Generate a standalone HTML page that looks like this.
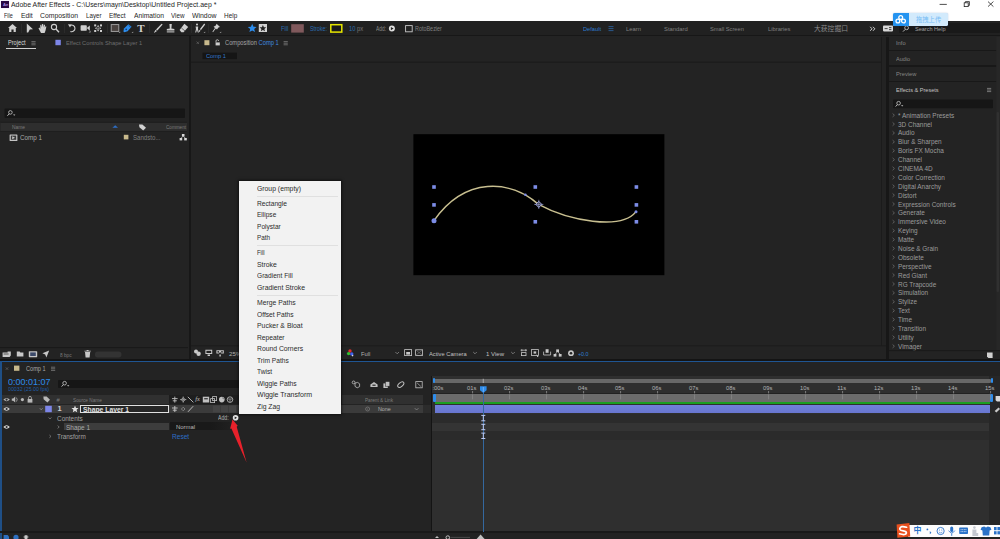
<!DOCTYPE html>
<html><head><meta charset="utf-8"><title>Adobe After Effects</title>
<style>
*{margin:0;padding:0;box-sizing:border-box}
html,body{width:1000px;height:539px;overflow:hidden;background:#232323}
body{position:relative;font-family:"Liberation Sans","Noto Sans CJK SC",sans-serif;font-size:6.5px;color:#9a9a9a}
.a{position:absolute}
.t{position:absolute;white-space:nowrap;line-height:10px;height:10px}
.w{color:#111}
.bl{color:#2d8ceb}
.mi{font-size:6.8px;color:#2c2c2c}
svg{position:absolute;overflow:visible}
</style></head><body>

<!-- title + menu -->
<div class="a" style="left:0;top:0;width:1000px;height:21px;background:#fff"></div>
<div class="a" style="left:1.4px;top:1.2px;width:7.4px;height:6.8px;background:#2a0845;box-shadow:0 0 0.8px #c9a8ff"></div>
<div class="t" style="left:2.9px;top:-0.2px;font-size:4.2px;color:#a78be0;font-weight:bold">Ae</div>
<div class="t" style="left:11.4px;top:0.4px;font-size:6.9px;color:#262626;transform-origin:0 50%;transform:scaleX(1.0049)">Adobe After Effects - C:\Users\mayn\Desktop\Untitled Project.aep *</div>
<div class="t" style="left:4.25px;top:11.2px;font-size:6.9px;color:#262626;transform-origin:0 50%;transform:scaleX(0.7876)">File</div>
<div class="t" style="left:20.75px;top:11.2px;font-size:6.9px;color:#262626;transform-origin:0 50%;transform:scaleX(0.9895)">Edit</div>
<div class="t" style="left:40.00px;top:11.2px;font-size:6.9px;color:#262626;transform-origin:0 50%;transform:scaleX(0.9918)">Composition</div>
<div class="t" style="left:86.00px;top:11.2px;font-size:6.9px;color:#262626;transform-origin:0 50%;transform:scaleX(0.8986)">Layer</div>
<div class="t" style="left:109.25px;top:11.2px;font-size:6.9px;color:#262626;transform-origin:0 50%;transform:scaleX(0.9429)">Effect</div>
<div class="t" style="left:133.75px;top:11.2px;font-size:6.9px;color:#262626;transform-origin:0 50%;transform:scaleX(0.9786)">Animation</div>
<div class="t" style="left:171.00px;top:11.2px;font-size:6.9px;color:#262626;transform-origin:0 50%;transform:scaleX(0.9114)">View</div>
<div class="t" style="left:192.00px;top:11.2px;font-size:6.9px;color:#262626;transform-origin:0 50%;transform:scaleX(0.9994)">Window</div>
<div class="t" style="left:224.25px;top:11.2px;font-size:6.9px;color:#262626;transform-origin:0 50%;transform:scaleX(0.9350)">Help</div>
<!-- window controls -->
<svg style="left:930px;top:0" width="70" height="10" viewBox="930 0 70 10">
 <path d="M939.6 4.4 H946.8" stroke="#222" stroke-width="0.8"/>
 <rect x="964.2" y="2.8" width="4" height="3.8" fill="none" stroke="#222" stroke-width="0.8"/>
 <path d="M965.4 2.8 V1.6 H969.4 V5.4 H968.2" fill="none" stroke="#222" stroke-width="0.8"/>
 <path d="M988 1.6 L993.4 6.6 M993.4 1.6 L988 6.6" stroke="#222" stroke-width="0.8"/>
</svg>

<!-- toolbar -->
<div class="a" id="toolbar" style="left:0;top:21px;width:1000px;height:14px;background:#212121"></div>

<!-- toolbar icons -->
<div class="a" style="left:899.4px;top:22.6px;width:100.6px;height:10px;background:#191919;border-radius:1px"></div>
<svg style="left:0;top:21px" width="1000" height="15" viewBox="0 21 1000 15">
 <g fill="#cfcfcf" stroke="none">
  <!-- home -->
  <path d="M12.5 24 L17 28 L15.8 28 L15.8 32 L13.6 32 L13.6 29.5 L11.4 29.5 L11.4 32 L9.2 32 L9.2 28 L8 28 Z"/>
  <!-- selection arrow -->
  <path d="M26.8 23.5 L33 29.3 L29.8 29.5 L28.2 32.6 L26.8 32.6 Z"/>
  <!-- hand -->
  <path d="M38.5 28.2 L39.6 27.6 L40.3 29 L40.3 25 L41.3 24.6 L41.8 27.2 L42.1 24 L43.2 24 L43.4 27.2 L44 24.6 L45 24.9 L44.8 27.8 L45.6 26.2 L46.4 26.6 L45.4 31 L44.6 33 L41 33 Z"/>
 </g>
 <!-- zoom -->
 <circle cx="54" cy="27" r="2.6" fill="none" stroke="#cfcfcf" stroke-width="1.1"/>
 <path d="M56 29 L59 32.3" stroke="#cfcfcf" stroke-width="1.4" fill="none"/>
 <!-- rotate -->
 <path d="M70.2 25.4 A3.3 3.3 0 1 1 70.4 31.4" fill="none" stroke="#cfcfcf" stroke-width="1.1"/>
 <path d="M68 24.2 L71.6 24.4 L70 27.6 Z" fill="#cfcfcf"/>
 <!-- camera -->
 <rect x="80.6" y="25.2" width="6.2" height="5.6" rx="0.8" fill="#cfcfcf"/>
 <path d="M86.8 28 L89.8 25.4 L89.8 30.8 Z" fill="#cfcfcf"/>
 <path d="M88.6 32.4 L90.6 32.4 L90.6 30.6 Z" fill="#999"/>
 <!-- pan behind -->
 <g fill="#cfcfcf">
  <rect x="94.2" y="24.4" width="2" height="2"/><rect x="100" y="24.4" width="2" height="2"/>
  <rect x="94.2" y="30" width="2" height="2"/><rect x="100" y="30" width="2" height="2"/>
  <path d="M98.1 25 L99.4 26.8 L96.8 26.8 Z M98.1 31.4 L99.4 29.6 L96.8 29.6 Z M95 28.2 L96.6 27 L96.6 29.4 Z M101.2 28.2 L99.6 27 L99.6 29.4 Z"/>
  <rect x="97.5" y="27.6" width="1.2" height="1.2"/>
 </g>
 <!-- rectangle tool -->
 <rect x="111.2" y="24.6" width="7.6" height="6.8" fill="#4a4340" stroke="#a8a8a8" stroke-width="0.9"/>
 <path d="M118.6 33 L120.2 33 L120.2 31.6 Z" fill="#999"/>
 <!-- pen (blue, selected) -->
 <path d="M123.4 31.6 L124 28.4 L128.4 24.2 L131.6 26.8 L127.6 31.2 L124.4 32.2 Z" fill="#2d8ceb"/>
 <path d="M128.6 25.4 L130.6 27.2" stroke="#0d3c78" stroke-width="0.7"/>
 <circle cx="126.2" cy="29.4" r="0.8" fill="#0d3c78"/>
 <path d="M131.6 33 L133.2 33 L133.2 31.6 Z" fill="#999"/>
 <!-- pin -->
 <path d="M216.6 23.8 L220 27 L218.4 27.4 L217 29.6 L215.8 28.6 L213 32.2 L212.4 31.8 L215 28 L213.6 26.8 L215.8 25.4 Z" fill="#cfcfcf"/>
 <path d="M219.6 33 L221.2 33 L221.2 31.6 Z" fill="#999"/>
 <!-- brush -->
 <path d="M161.6 23.8 L162.6 24.6 L157.4 30.4 L156 29.4 Z" fill="#cfcfcf"/>
 <path d="M155.6 29.8 L157 31 L154.4 32.8 L154 32.4 Z" fill="#cfcfcf"/>
 <!-- stamp -->
 <path d="M169.4 24 L171.8 24 L171.4 28.4 L174.4 29 L174.4 30.6 L166.8 30.6 L166.8 29 L169.8 28.4 Z" fill="#cfcfcf"/>
 <rect x="166.8" y="31.4" width="7.6" height="1" fill="#cfcfcf"/>
 <!-- eraser -->
 <path d="M184.4 23.8 L188.2 27 L183.6 32.2 L181.4 32.2 L179.6 30 Z" fill="#cfcfcf"/>
 <path d="M181.4 28 L185 31" stroke="#1f1f1f" stroke-width="0.6"/>
 <!-- roto -->
 <circle cx="197" cy="24.6" r="1" fill="#cfcfcf"/>
 <path d="M195.6 26.4 L198.2 26.4 L198 29 L198.8 32.6 L197.8 32.6 L197 29.8 L196.2 32.6 L195.2 32.6 L196 29 Z" fill="#cfcfcf"/>
 <path d="M204.2 23.6 L205.2 24.4 L201 30 L199.8 29.2 Z M199.4 29.8 L200.6 30.8 L198.6 32.4 Z" fill="#cfcfcf"/>
 <path d="M203.6 33 L205.2 33 L205.2 31.6 Z" fill="#999"/>
 <!-- separators -->
 <path d="M21.5 24 V33 M64.5 24 V33 M107.5 24 V33 M149.5 24 V33 M191.5 24 V33 M208.5 24 V33" stroke="#333" stroke-width="0.6"/>
 <!-- star -->
 <path d="M252.2 23.8 L253.5 26.7 L256.6 26.9 L254.2 29 L255 32.1 L252.2 30.4 L249.4 32.1 L250.2 29 L247.8 26.9 L250.9 26.7 Z" fill="#2d8ceb"/>
 <rect x="258.8" y="24" width="8.2" height="8" fill="#d4d4d4"/>
 <path d="M262.9 25 L263.9 27.2 L266.2 27.3 L264.4 28.9 L265 31.2 L262.9 30 L260.8 31.2 L261.4 28.9 L259.6 27.3 L261.9 27.2 Z" fill="#222"/>
 <!-- fill swatch -->
 <rect x="291.2" y="24.2" width="12.6" height="8.4" fill="#80595c"/>
 <rect x="330.8" y="24.7" width="11" height="7.4" fill="#1a1a1a" stroke="#e6e600" stroke-width="1.5"/>
 <!-- add circle -->
 <circle cx="391.9" cy="28.6" r="3" fill="#e0e0e0"/>
 <path d="M390.9 27 L393.6 28.6 L390.9 30.2 Z" fill="#1f1f1f"/>
 <!-- checkbox -->
 <rect x="405.6" y="25.6" width="6.6" height="6.2" fill="none" stroke="#c8c8c8" stroke-width="0.9"/>
 <!-- workspace menu icon -->
 <path d="M608.5 26.6 H613.5 M608.5 28.6 H613.5 M608.5 30.6 H613.5" stroke="#2d6fb5" stroke-width="0.7"/>
 <!-- chevrons -->
 <path d="M870.2 26.8 L872 28.8 L870.2 30.8 M873 26.8 L874.8 28.8 L873 30.8" stroke="#cfcfcf" stroke-width="1" fill="none"/>
 <!-- sync icon -->
 <rect x="883" y="25.6" width="10" height="5.8" rx="0.8" fill="#d8d8d8"/>
 <path d="M884.6 28.6 H887.6 M889 27.6 H891.4 M889 29.6 H891.4" stroke="#222" stroke-width="0.8"/>
 <!-- search icon -->
 <circle cx="906.6" cy="27.8" r="1.9" fill="none" stroke="#bbb" stroke-width="0.9"/>
 <path d="M905.2 29.4 L903 31.6" stroke="#bbb" stroke-width="1"/>
</svg>
<div class="t" style="left:141px;top:23.4px;font-family:'Liberation Serif',serif;font-size:11px;color:#cfcfcf;font-weight:bold;transform:translateX(-50%)">T</div>
<div class="t" style="left:280.6px;top:24px;font-size:6.4px;color:#2b6cb0;transform-origin:0 50%;transform:scaleX(0.9055)">Fill</div>
<div class="t" style="left:310.0px;top:24px;font-size:6.4px;color:#2b6cb0;transform-origin:0 50%;transform:scaleX(0.8395)">Stroke:</div>
<div class="t" style="left:348.8px;top:24px;font-size:6.4px;color:#777;transform-origin:0 50%;transform:scaleX(0.9079)"><span style="color:#2b6cb0">10</span> px</div>
<div class="t" style="left:375.6px;top:24px;font-size:6.4px;color:#8a8a8a;transform-origin:0 50%;transform:scaleX(0.7601)">Add:</div>
<div class="t" style="left:415.0px;top:24px;font-size:6.4px;color:#808080;transform-origin:0 50%;transform:scaleX(0.8506)">RotoBezier</div>
<div class="t" style="left:583.0px;top:24px;font-size:6.2px;color:#2d7bd0;transform-origin:0 50%;transform:scaleX(0.9179)">Default</div>
<div class="t" style="left:625.5px;top:24px;font-size:6.2px;color:#808080;transform-origin:0 50%;transform:scaleX(0.9477)">Learn</div>
<div class="t" style="left:663.8px;top:24px;font-size:6.2px;color:#808080;transform-origin:0 50%;transform:scaleX(0.9433)">Standard</div>
<div class="t" style="left:710.0px;top:24px;font-size:6.2px;color:#808080;transform-origin:0 50%;transform:scaleX(0.9186)">Small Screen</div>
<div class="t" style="left:767.5px;top:24px;font-size:6.2px;color:#808080;transform-origin:0 50%;transform:scaleX(0.9480)">Libraries</div>
<div class="t" style="left:914.9px;top:24px;font-size:6.2px;color:#a0a0a0;transform-origin:0 50%;transform:scaleX(0.8954)">Search Help</div>
<div class="t" style="left:814px;top:23.8px;font-size:6.8px;color:#8a8a8a;transform-origin:0 50%;transform:scaleX(1.0005)">大获控掘口</div>


<!-- project panel -->
<div class="a" style="left:0;top:34.8px;width:1000px;height:1.4px;background:#171717"></div>
<div class="a" style="left:188.6px;top:36.2px;width:2.6px;height:323px;background:#171717"></div>
<div class="t" style="left:7.5px;top:38.4px;font-size:6.4px;color:#d8d8d8;transform-origin:0 50%;transform:scaleX(0.8798)">Project</div>
<div class="a" style="left:6px;top:47.6px;width:30px;height:1px;background:#d0d0d0"></div>
<svg style="left:0;top:36px" width="190" height="325" viewBox="0 36 190 325">
 <path d="M31.4 41.6 H35.6 M31.4 43.2 H35.6 M31.4 44.8 H35.6" stroke="#8a8a8a" stroke-width="0.7"/>
 <rect x="55.4" y="39.8" width="5.4" height="5.4" fill="#7d86e8"/>
 <!-- search -->
 <rect x="4.5" y="108.4" width="180.5" height="9.6" rx="1" fill="#161616"/>
 <circle cx="10.4" cy="112.4" r="1.8" fill="none" stroke="#c8c8c8" stroke-width="0.8"/>
 <path d="M9.2 113.8 L7.4 115.8" stroke="#c8c8c8" stroke-width="0.9"/>
 <path d="M13 114.4 L15.4 114.4 L14.2 115.8 Z" fill="#c8c8c8"/>
 <!-- column header -->
 <rect x="0.5" y="122.6" width="186.5" height="8.6" fill="#2e2e2e"/>
 <path d="M0.5 122.4 H187 M0.5 131.4 H187" stroke="#1a1a1a" stroke-width="0.6"/>
 <path d="M112.4 127.8 L115.2 125.2 L118 127.8 Z" fill="#2d6fc8"/>
 <path d="M139 124.6 L142.4 124.4 L146 127.8 L143.2 130.6 L139.4 127.2 Z" fill="#d0d0d0"/>
 <!-- comp row -->
 <rect x="9.6" y="134.4" width="7.8" height="6.6" rx="0.6" fill="#c4c4c4"/>
 <rect x="10.8" y="135.6" width="5.4" height="4.2" fill="#3a3a3a"/>
 <path d="M12.2 136.2 L15 137.7 L12.2 139.2 Z" fill="#c4c4c4"/>
 <rect x="123.8" y="134.8" width="4.6" height="4.6" fill="#c8b98c"/>
 <g fill="#d8d8d8"><rect x="181.9" y="134" width="2.6" height="2.4"/><rect x="179.6" y="138" width="2.6" height="2.4"/><rect x="184.2" y="138" width="2.6" height="2.4"/><path d="M183.2 136 L180.9 138.4 M183.2 136 L185.5 138.4" stroke="#d8d8d8" stroke-width="0.7"/></g>
 <!-- footer -->
 <path d="M0 347.6 H188" stroke="#161616" stroke-width="0.8"/>
 <g fill="#c8c8c8">
  <path d="M2.6 352.4 H7.6 V351.4 H10.8 V355.4 L9.6 357 H2.6 Z"/>
  <path d="M16.8 351.6 H19.6 L20.4 352.4 H23.4 V356.6 H16.8 Z"/>
  <rect x="28.8" y="351.2" width="8.4" height="6" rx="0.6"/>
  <path d="M49.2 350.4 L46.4 357.4 L45.2 354.4 L42.4 353.2 Z"/>
  <path d="M85 352 H90.2 L89.6 357.6 H85.6 Z M84.4 350.8 H90.8 V351.6 H84.4 Z M86.6 350 H88.6 V350.8 H86.6 Z"/>
 </g>
 <rect x="30.2" y="352.4" width="5.6" height="3.6" fill="#3c4a6a"/>
 <path d="M3.6 354 H8.6" stroke="#222" stroke-width="0.7"/>
 <rect x="95" y="351.6" width="26.4" height="5.8" rx="2.6" fill="#333"/>
</svg>
<div class="t" style="left:65.6px;top:38.4px;font-size:6.2px;color:#6e6e6e;transform-origin:0 50%;transform:scaleX(0.9243)">Effect Controls Shape Layer 1</div>
<div class="t" style="left:12px;top:122px;font-size:5.8px;color:#7c7c7c;transform-origin:0 50%;transform:scaleX(0.8404)">Name</div>
<div class="t" style="left:166.2px;top:122px;font-size:5.8px;color:#7c7c7c;transform-origin:0 50%;transform:scaleX(0.7955)">Comment</div>
<div class="t" style="left:20px;top:133.3px;font-size:7px;color:#a8a8a8;transform-origin:0 50%;transform:scaleX(0.8974)">Comp 1</div>
<div class="t" style="left:132.5px;top:133.4px;font-size:6.8px;color:#7e7e7e;transform-origin:0 50%;transform:scaleX(0.8984)">Sandsto...</div>
<div class="t" style="left:60.4px;top:349.6px;font-size:5.4px;color:#7a7a7a;transform-origin:0 50%;transform:scaleX(0.8796)">8 bpc</div>


<!-- comp panel -->
<svg style="left:190px;top:36px" width="700" height="325" viewBox="190 36 700 325">
 <path d="M196.6 41.6 L199 44 M199 41.6 L196.6 44" stroke="#666" stroke-width="0.7"/>
 <rect x="204.4" y="40.2" width="5" height="5" fill="#c8b98c"/>
 <path d="M215.6 42.4 H219.8 V45.4 H215.6 Z" fill="#cfcfcf"/>
 <path d="M216 42.4 V41 A1.3 1.3 0 0 1 218.6 41" fill="none" stroke="#cfcfcf" stroke-width="0.8"/>
 <path d="M283.6 41.6 H287.8 M283.6 43.2 H287.8 M283.6 44.8 H287.8" stroke="#8a8a8a" stroke-width="0.7"/>
 <rect x="202.5" y="52.6" width="34.5" height="6.6" fill="#151515"/>
 <path d="M191 62.2 H881" stroke="#181818" stroke-width="0.9"/>
 <!-- viewer -->
 <rect x="413.4" y="134.2" width="251" height="141" fill="#000"/>
 <path d="M434 220.6 C465.3 176 510.7 179.8 538.5 204.4 C568.2 220.5 621.2 230.7 636 211.6" fill="none" stroke="#c8bf90" stroke-width="1.5"/>
 <g fill="#7c8ce6">
  <rect x="432.2" y="185.2" width="3.6" height="3.6"/><rect x="533.5" y="185.2" width="3.6" height="3.6"/><rect x="634.6" y="185.2" width="3.6" height="3.6"/>
  <rect x="432.2" y="203.1" width="3.6" height="3.6"/><rect x="634.6" y="203.1" width="3.6" height="3.6"/>
  <rect x="533.5" y="220" width="3.6" height="3.6"/><rect x="634.6" y="220" width="3.6" height="3.6"/>
  <circle cx="434" cy="220.8" r="2.5"/>
  <circle cx="636" cy="211.8" r="1.5"/>
  <circle cx="525.4" cy="194.8" r="1.3"/>
 </g>
 <path d="M538.8 201.4 L541.8 204.4 L538.8 207.4 L535.8 204.4 Z" fill="#222" stroke="#aab2ee" stroke-width="1"/>
 <path d="M538.8 199.8 V209 M534.2 204.4 H543.4" stroke="#aab2ee" stroke-width="0.6"/>
 <!-- footer -->
 <path d="M191 345.8 H886" stroke="#1a1a1a" stroke-width="0.8"/>
 <g fill="#c8c8c8">
  <circle cx="196" cy="351.4" r="2"/><circle cx="198.6" cy="353.8" r="2.2"/>
  <path d="M205.4 349.8 H212.2 V354 H205.4 Z M207.6 354.6 H210 V356 H207.6 Z"/>
  <path d="M216.4 350.2 H223.8 V353.4 H221.4 L220.1 352 L218.8 353.4 H216.4 Z M219.4 354.6 H220.8 V356.4 H219.4 Z"/>
 </g>
 <rect x="206.4" y="350.8" width="4.8" height="2.2" fill="#232323"/>
 <circle cx="218.2" cy="351.8" r="0.9" fill="#232323"/><circle cx="222" cy="351.8" r="0.9" fill="#232323"/>
 <circle cx="350" cy="351" r="1.7" fill="#e03030"/><circle cx="348.6" cy="353.6" r="1.7" fill="#30c030"/><circle cx="351.8" cy="354" r="1.7" fill="#4060f0"/><circle cx="352.6" cy="355.6" r="0.8" fill="#ddd"/>
 <path d="M395.4 352 L397.2 353.8 L399 352 M473.2 352 L475 353.8 L476.8 352 M511.2 352 L513 353.8 L514.8 352" stroke="#8a8a8a" stroke-width="0.8" fill="none"/>
 <rect x="404.6" y="349.6" width="7" height="6" fill="none" stroke="#c8c8c8" stroke-width="0.8"/><rect x="406.2" y="352" width="3.8" height="2.6" fill="#c8c8c8"/>
 <rect x="415.6" y="349.8" width="7" height="5.6" fill="none" stroke="#c8c8c8" stroke-width="0.8"/><path d="M415.6 349.8 L422.6 355.4 M422.6 349.8 L415.6 355.4" stroke="#888" stroke-width="0.5"/>
 <g fill="none" stroke="#c8c8c8" stroke-width="0.8">
  <path d="M520.6 350.2 H527 M521.8 349.2 V351.4 M525.8 349.2 V351.4"/><rect x="521.6" y="352.6" width="4.4" height="3"/>
  <rect x="531.6" y="349.6" width="6.8" height="5.8"/>
  <path d="M543.6 351.6 V355 H550.6 V351.6"/>
 </g>
 <g fill="#c8c8c8">
  <rect x="533.6" y="351.4" width="2.6" height="2.2"/><path d="M536.4 354 L538.6 357 L537.2 357 Z"/>
  <rect x="545.6" y="349.2" width="3" height="3.6"/>
  <rect x="556.2" y="349.4" width="2.8" height="2.6"/><rect x="553.6" y="354" width="2.8" height="2.6"/><rect x="558.8" y="354" width="2.8" height="2.6"/><path d="M557.6 351.6 L555 354.4 M557.6 351.6 L560.2 354.4" stroke="#c8c8c8" stroke-width="0.7"/>
  <circle cx="571" cy="353.2" r="2.9"/>
 </g>
 <circle cx="571" cy="353.2" r="1.3" fill="#232323"/>
</svg>
<div class="t" style="left:225px;top:38.4px;font-size:6.4px;color:#a4a4a4;transform-origin:0 50%;transform:scaleX(0.9014)">Composition <span style="color:#3f8ae0">Comp 1</span></div>
<div class="t" style="left:205.6px;top:50.9px;font-size:6.2px;color:#3478d0;transform-origin:0 50%;transform:scaleX(0.9229)">Comp 1</div>
<div class="t" style="left:229px;top:348.6px;font-size:6.2px;color:#b0b0b0">25%</div>
<div class="t" style="left:360.6px;top:348.6px;font-size:6.2px;color:#b0b0b0;transform-origin:0 50%;transform:scaleX(0.9415)">Full</div>
<div class="t" style="left:429px;top:348.6px;font-size:6.2px;color:#c0c0c0;transform-origin:0 50%;transform:scaleX(0.9291)">Active Camera</div>
<div class="t" style="left:485.6px;top:348.6px;font-size:6.2px;color:#c0c0c0;transform-origin:0 50%;transform:scaleX(0.9746)">1 View</div>
<div class="t" style="left:578.4px;top:348.6px;font-size:6.2px;color:#2d7bd0;transform-origin:0 50%;transform:scaleX(0.8593)">+0.0</div>


<!-- right panel -->
<div class="a" style="left:886.4px;top:37px;width:3px;height:322px;background:#171717"></div>
<div class="a" style="left:880.6px;top:37px;width:0.8px;height:309px;background:#1b1b1b"></div>
<div class="a" style="left:889px;top:49.5px;width:111px;height:1.4px;background:#181818"></div>
<div class="a" style="left:889px;top:65.3px;width:111px;height:1.4px;background:#181818"></div>
<div class="a" style="left:889px;top:81.0px;width:111px;height:1.4px;background:#181818"></div>
<div class="t" style="left:896.2px;top:37.8px;font-size:6.2px;color:#868686;transform-origin:0 50%;transform:scaleX(0.9295)">Info</div>
<div class="t" style="left:896.2px;top:53.6px;font-size:6.2px;color:#868686;transform-origin:0 50%;transform:scaleX(0.8971)">Audio</div>
<div class="t" style="left:896.2px;top:69.2px;font-size:6.2px;color:#868686;transform-origin:0 50%;transform:scaleX(0.9266)">Preview</div>
<div class="t" style="left:896.2px;top:85.0px;font-size:6.2px;color:#c4c4c4;transform-origin:0 50%;transform:scaleX(0.8998)">Effects &amp; Presets</div>
<div class="t" style="left:898px;top:110.70px;font-size:6.45px;color:#9c9c9c">* Animation Presets</div>
<div class="t" style="left:898px;top:119.58px;font-size:6.45px;color:#9c9c9c">3D Channel</div>
<div class="t" style="left:898px;top:128.47px;font-size:6.45px;color:#9c9c9c">Audio</div>
<div class="t" style="left:898px;top:137.35px;font-size:6.45px;color:#9c9c9c">Blur &amp; Sharpen</div>
<div class="t" style="left:898px;top:146.24px;font-size:6.45px;color:#9c9c9c">Boris FX Mocha</div>
<div class="t" style="left:898px;top:155.12px;font-size:6.45px;color:#9c9c9c">Channel</div>
<div class="t" style="left:898px;top:164.01px;font-size:6.45px;color:#9c9c9c">CINEMA 4D</div>
<div class="t" style="left:898px;top:172.89px;font-size:6.45px;color:#9c9c9c">Color Correction</div>
<div class="t" style="left:898px;top:181.78px;font-size:6.45px;color:#9c9c9c">Digital Anarchy</div>
<div class="t" style="left:898px;top:190.66px;font-size:6.45px;color:#9c9c9c">Distort</div>
<div class="t" style="left:898px;top:199.55px;font-size:6.45px;color:#9c9c9c">Expression Controls</div>
<div class="t" style="left:898px;top:208.43px;font-size:6.45px;color:#9c9c9c">Generate</div>
<div class="t" style="left:898px;top:217.32px;font-size:6.45px;color:#9c9c9c">Immersive Video</div>
<div class="t" style="left:898px;top:226.20px;font-size:6.45px;color:#9c9c9c">Keying</div>
<div class="t" style="left:898px;top:235.08px;font-size:6.45px;color:#9c9c9c">Matte</div>
<div class="t" style="left:898px;top:243.97px;font-size:6.45px;color:#9c9c9c">Noise &amp; Grain</div>
<div class="t" style="left:898px;top:252.85px;font-size:6.45px;color:#9c9c9c">Obsolete</div>
<div class="t" style="left:898px;top:261.74px;font-size:6.45px;color:#9c9c9c">Perspective</div>
<div class="t" style="left:898px;top:270.62px;font-size:6.45px;color:#9c9c9c">Red Giant</div>
<div class="t" style="left:898px;top:279.51px;font-size:6.45px;color:#9c9c9c">RG Trapcode</div>
<div class="t" style="left:898px;top:288.39px;font-size:6.45px;color:#9c9c9c">Simulation</div>
<div class="t" style="left:898px;top:297.28px;font-size:6.45px;color:#9c9c9c">Stylize</div>
<div class="t" style="left:898px;top:306.16px;font-size:6.45px;color:#9c9c9c">Text</div>
<div class="t" style="left:898px;top:315.05px;font-size:6.45px;color:#9c9c9c">Time</div>
<div class="t" style="left:898px;top:323.93px;font-size:6.45px;color:#9c9c9c">Transition</div>
<div class="t" style="left:898px;top:332.82px;font-size:6.45px;color:#9c9c9c">Utility</div>
<div class="t" style="left:898px;top:341.70px;font-size:6.45px;color:#9c9c9c">Vimager</div>
<svg style="left:886px;top:36px" width="114" height="325" viewBox="886 36 114 325">
<path d="M987 88.4 H991.2 M987 90 H991.2 M987 91.6 H991.2" stroke="#9a9a9a" stroke-width="0.7"/>
<rect x="893" y="99.4" width="100" height="8.8" rx="1" fill="#161616"/>
<circle cx="898.6" cy="103.2" r="1.8" fill="none" stroke="#c8c8c8" stroke-width="0.8"/><path d="M897.4 104.6 L895.6 106.6" stroke="#c8c8c8" stroke-width="0.9"/><path d="M901 105.2 L903.4 105.2 L902.2 106.6 Z" fill="#c8c8c8"/>
<path d="M892.6 113.50 L894.4 115.20 L892.6 116.90 M892.6 122.38 L894.4 124.08 L892.6 125.78 M892.6 131.27 L894.4 132.97 L892.6 134.67 M892.6 140.15 L894.4 141.85 L892.6 143.55 M892.6 149.04 L894.4 150.74 L892.6 152.44 M892.6 157.92 L894.4 159.62 L892.6 161.32 M892.6 166.81 L894.4 168.51 L892.6 170.21 M892.6 175.69 L894.4 177.39 L892.6 179.09 M892.6 184.58 L894.4 186.28 L892.6 187.98 M892.6 193.46 L894.4 195.16 L892.6 196.86 M892.6 202.35 L894.4 204.05 L892.6 205.75 M892.6 211.23 L894.4 212.93 L892.6 214.63 M892.6 220.12 L894.4 221.82 L892.6 223.52 M892.6 229.00 L894.4 230.70 L892.6 232.40 M892.6 237.88 L894.4 239.58 L892.6 241.28 M892.6 246.77 L894.4 248.47 L892.6 250.17 M892.6 255.65 L894.4 257.35 L892.6 259.05 M892.6 264.54 L894.4 266.24 L892.6 267.94 M892.6 273.42 L894.4 275.12 L892.6 276.82 M892.6 282.31 L894.4 284.01 L892.6 285.71 M892.6 291.19 L894.4 292.89 L892.6 294.59 M892.6 300.08 L894.4 301.78 L892.6 303.48 M892.6 308.96 L894.4 310.66 L892.6 312.36 M892.6 317.85 L894.4 319.55 L892.6 321.25 M892.6 326.73 L894.4 328.43 L892.6 330.13 M892.6 335.62 L894.4 337.32 L892.6 339.02 M892.6 344.50 L894.4 346.20 L892.6 347.90" fill="none" stroke="#777" stroke-width="0.7"/>
<path d="M889 350.6 H1000" stroke="#181818" stroke-width="0.8"/>
<path d="M987 352.4 H992.6 V358 H988.4 L987 356.6 Z" fill="#d0d0d0"/>
<rect x="996.2" y="37" width="3.8" height="313" fill="#272727"/><rect x="996.6" y="112" width="2.4" height="180" rx="1" fill="#303030"/>
</svg>


<!-- timeline -->
<div class="a" style="left:0;top:359.4px;width:1000px;height:1.4px;background:#141414"></div>
<div class="a" style="left:0;top:360.8px;width:1000px;height:1.1px;background:#1f5592"></div>
<div class="a" style="left:0;top:361px;width:1.7px;height:178px;background:#1f4f86"></div>
<div class="a" style="left:432px;top:376px;width:557px;height:156px;background:#2f2f2f"></div>
<div class="a" style="left:989px;top:376px;width:11px;height:156px;background:#272727"></div>
<div class="a" style="left:431px;top:376px;width:1.2px;height:156px;background:#141414"></div>
<div class="a" style="left:0;top:531.4px;width:1000px;height:1.6px;background:#191919"></div>
<div class="a" style="left:1.6px;top:533px;width:998.4px;height:6px;background:#222"></div>
<div class="a" style="left:57.6px;top:380.2px;width:282px;height:7.4px;background:#161616;border-radius:1px"></div>
<div class="a" style="left:2px;top:395.4px;width:167px;height:8.4px;background:#303030"></div>
<div class="a" style="left:169.4px;top:395.4px;width:172px;height:8.4px;background:#1e1e1e"></div>
<div class="a" style="left:342px;top:395.4px;width:81px;height:8.4px;background:#303030"></div>
<div class="a" style="left:2px;top:404.9px;width:421px;height:8.2px;background:#3b3b3b"></div>
<div class="a" style="left:423px;top:404.9px;width:8px;height:8.2px;background:#2c2c2c"></div>
<div class="a" style="left:80px;top:405.3px;width:89px;height:7.4px;background:#262626;border:0.8px solid #e0e0e0"></div>
<div class="a" style="left:63.8px;top:423px;width:105.4px;height:7.4px;background:#3d3d3d"></div>
<div class="a" style="left:170.4px;top:422.4px;width:68px;height:8px;background:linear-gradient(90deg,#191919 60%,#222 100%)"></div>
<div class="a" style="left:432.4px;top:393.2px;width:556.6px;height:1.1px;background:#222"></div>
<div class="a" style="left:433px;top:378.8px;width:558px;height:4.2px;background:#686868;border-radius:1px"></div>
<div class="a" style="left:432.6px;top:378.4px;width:2.4px;height:4.8px;background:#2d8ceb;border-radius:1px"></div>
<div class="a" style="left:990.6px;top:378.4px;width:2.4px;height:4.8px;background:#2d8ceb;border-radius:1px"></div>
<div class="a" style="left:435px;top:394.4px;width:555px;height:7.2px;background:#6c6c6c"></div>
<div class="a" style="left:432.8px;top:394.4px;width:2.8px;height:7.6px;background:#2d8ceb;border-radius:1px"></div>
<div class="a" style="left:990.4px;top:394.4px;width:2.6px;height:7.6px;background:#2d8ceb;border-radius:1px"></div>
<div class="a" style="left:435px;top:402.3px;width:555px;height:2px;background:#1b9f21"></div>
<div class="a" style="left:435px;top:405.1px;width:555px;height:7.9px;background:linear-gradient(#7181da,#6876d0)"></div>
<div class="a" style="left:432.4px;top:413.6px;width:556.6px;height:9px;background:#2b2b2b"></div>
<div class="a" style="left:432.4px;top:422.8px;width:556.6px;height:8.4px;background:#343434"></div>
<div class="a" style="left:432.4px;top:431.4px;width:556.6px;height:9px;background:#2b2b2b"></div>
<div class="a" style="left:482.8px;top:392px;width:0.9px;height:140px;background:#34689f"></div>
<div class="t" style="left:432.4px;top:383.4px;font-size:5.8px;color:#b4b4b4">:00s</div>
<div class="t" style="left:471.7px;top:383.4px;font-size:5.8px;color:#b4b4b4;transform:translateX(-50%)">01s</div>
<div class="t" style="left:508.7px;top:383.4px;font-size:5.8px;color:#b4b4b4;transform:translateX(-50%)">02s</div>
<div class="t" style="left:545.7px;top:383.4px;font-size:5.8px;color:#b4b4b4;transform:translateX(-50%)">03s</div>
<div class="t" style="left:582.7px;top:383.4px;font-size:5.8px;color:#b4b4b4;transform:translateX(-50%)">04s</div>
<div class="t" style="left:619.7px;top:383.4px;font-size:5.8px;color:#b4b4b4;transform:translateX(-50%)">05s</div>
<div class="t" style="left:656.7px;top:383.4px;font-size:5.8px;color:#b4b4b4;transform:translateX(-50%)">06s</div>
<div class="t" style="left:693.7px;top:383.4px;font-size:5.8px;color:#b4b4b4;transform:translateX(-50%)">07s</div>
<div class="t" style="left:730.7px;top:383.4px;font-size:5.8px;color:#b4b4b4;transform:translateX(-50%)">08s</div>
<div class="t" style="left:767.7px;top:383.4px;font-size:5.8px;color:#b4b4b4;transform:translateX(-50%)">09s</div>
<div class="t" style="left:804.7px;top:383.4px;font-size:5.8px;color:#b4b4b4;transform:translateX(-50%)">10s</div>
<div class="t" style="left:841.7px;top:383.4px;font-size:5.8px;color:#b4b4b4;transform:translateX(-50%)">11s</div>
<div class="t" style="left:878.7px;top:383.4px;font-size:5.8px;color:#b4b4b4;transform:translateX(-50%)">12s</div>
<div class="t" style="left:915.7px;top:383.4px;font-size:5.8px;color:#b4b4b4;transform:translateX(-50%)">13s</div>
<div class="t" style="left:952.7px;top:383.4px;font-size:5.8px;color:#b4b4b4;transform:translateX(-50%)">14s</div>
<div class="t" style="left:989.7px;top:383.4px;font-size:5.8px;color:#b4b4b4;transform:translateX(-50%)">15s</div>
<svg style="left:0;top:361px" width="1000" height="178" viewBox="0 361 1000 178">
<path d="M472.6 391 V393.4 M509.6 391 V393.4 M546.6 391 V393.4 M583.6 391 V393.4 M620.6 391 V393.4 M657.6 391 V393.4 M694.6 391 V393.4 M731.6 391 V393.4 M768.6 391 V393.4 M805.6 391 V393.4 M842.6 391 V393.4 M879.6 391 V393.4 M916.6 391 V393.4 M953.6 391 V393.4 M990.6 391 V393.4" stroke="#a0a0a0" stroke-width="0.7"/><path d="M472.6 394.4 V399.4 M509.6 394.4 V399.4 M546.6 394.4 V399.4 M583.6 394.4 V399.4 M620.6 394.4 V399.4 M657.6 394.4 V399.4 M694.6 394.4 V399.4 M731.6 394.4 V399.4 M768.6 394.4 V399.4 M805.6 394.4 V399.4 M842.6 394.4 V399.4 M879.6 394.4 V399.4 M916.6 394.4 V399.4 M953.6 394.4 V399.4 M990.6 394.4 V399.4" stroke="#8c8c8c" stroke-width="0.7"/>
<path d="M480 386.2 H486.6 V390.2 L483.3 393 L480 390.2 Z" fill="#2d8ceb"/>
<path d="M483.3 387 V392" stroke="#9cc8ff" stroke-width="0.6"/><rect x="482.7" y="378.8" width="1.2" height="4.2" fill="#a0a0a0"/>
<path d="M481.3 415.4 H485.3 M481.3 420.8 H485.3 M483.3 415.4 V420.8" stroke="#bccaf4" stroke-width="1"/><path d="M481.3 424.3 H485.3 M481.3 429.7 H485.3 M483.3 424.3 V429.7" stroke="#bccaf4" stroke-width="1"/><path d="M481.3 433.1 H485.3 M481.3 438.5 H485.3 M483.3 433.1 V438.5" stroke="#bccaf4" stroke-width="1"/>
<path d="M5.8 367.4 L8.2 369.8 M8.2 367.4 L5.8 369.8" stroke="#666" stroke-width="0.7"/>
<rect x="14" y="365.6" width="5.4" height="5.2" fill="#c8b98c"/>
<path d="M51 367.2 H55.2 M51 368.8 H55.2 M51 370.4 H55.2" stroke="#8a8a8a" stroke-width="0.7"/>
<circle cx="64.6" cy="383.2" r="1.8" fill="none" stroke="#c8c8c8" stroke-width="0.8"/><path d="M63.4 384.6 L61.6 386.6" stroke="#c8c8c8" stroke-width="0.9"/><path d="M67 385.2 L69.4 385.2 L68.2 386.6 Z" fill="#c8c8c8"/>
<path d="M3.4 399.6 Q6.6 396.2 9.8 399.6 Q6.6 403.0 3.4 399.6 Z" fill="#b8b8b8"/><circle cx="6.6" cy="399.6" r="1.1" fill="#2a2a2a"/>
<path d="M3.4 409.0 Q6.6 405.6 9.8 409.0 Q6.6 412.4 3.4 409.0 Z" fill="#d8d8d8"/><circle cx="6.6" cy="409.0" r="1.1" fill="#2a2a2a"/>
<path d="M3.4 427.0 Q6.6 423.6 9.8 427.0 Q6.6 430.4 3.4 427.0 Z" fill="#e0e0e0"/><circle cx="6.6" cy="427.0" r="1.1" fill="#2a2a2a"/>
<path d="M11.8 398.4 H13.2 L15.2 396.6 V402.6 L13.2 400.8 H11.8 Z" fill="#b8b8b8"/><path d="M16.4 397.6 Q18 399.6 16.4 401.6" stroke="#b8b8b8" stroke-width="0.7" fill="none"/>
<circle cx="22.4" cy="399.6" r="1.6" fill="#b8b8b8"/>
<rect x="27.6" y="399" width="4.8" height="3.6" fill="#b8b8b8"/><path d="M28.6 399 V397.8 A1.4 1.4 0 0 1 31.4 397.8 V399" fill="none" stroke="#b8b8b8" stroke-width="0.8"/>
<path d="M43.4 396.6 L46.6 396.4 L50 399.8 L47.4 402.6 L43.6 399.2 Z" fill="#b8b8b8"/>
<path d="M39.8 408.2 L41.2 409.8 L42.6 408.2" stroke="#999" stroke-width="0.7" fill="none"/>
<rect x="45.2" y="405.8" width="6.6" height="6.4" fill="#7d86e8"/>
<path d="M75 405.6 L76 407.9 L78.5 408.1 L76.6 409.7 L77.2 412.2 L75 410.9 L72.8 412.2 L73.4 409.7 L71.5 408.1 L74 407.9 Z" fill="#e0e0e0"/>
<path d="M48.6 417.4 L50 419 L51.4 417.4" stroke="#8a8a8a" stroke-width="0.7" fill="none"/>
<path d="M57.6 425.6 L59.2 427 L57.6 428.4" stroke="#8a8a8a" stroke-width="0.7" fill="none"/>
<path d="M49.4 435 L51 436.4 L49.4 437.8" stroke="#8a8a8a" stroke-width="0.7" fill="none"/>
<path d="M174.8 396.6 V402.6 M172.0 398.6 H177.6 M172.8 400.8 H176.8" stroke="#c0c0c0" stroke-width="0.9"/>
<path d="M183.2 397.6 L185.2 399.6 L183.2 401.6 L181.2 399.6 Z" fill="none" stroke="#c0c0c0" stroke-width="0.8"/><path d="M183.2 396.4 V402.8 M180.0 399.6 H186.4" stroke="#c0c0c0" stroke-width="0.6"/>
<path d="M187.8 396.8 L193.4 402.4" stroke="#c0c0c0" stroke-width="0.9"/>
<rect x="202.8" y="396.7" width="6.4" height="5.8" fill="#c0c0c0"/><rect x="204.2" y="398.0" width="3.6" height="1.4" fill="#444"/>
<rect x="210.6" y="398.6" width="4" height="4" fill="none" stroke="#c0c0c0" stroke-width="0.8"/><rect x="212.6" y="396.6" width="4" height="4" fill="none" stroke="#c0c0c0" stroke-width="0.8"/>
<circle cx="221.8" cy="399.6" r="2.8" fill="#c0c0c0"/><path d="M221.8 397.6 A2 2 0 0 1 223.8 399.6 Z" fill="#333"/>
<circle cx="230.0" cy="399.6" r="2.8" fill="none" stroke="#c0c0c0" stroke-width="0.8"/><path d="M227.2 399.0 H232.8 M230.0 399.0 V402.4" stroke="#c0c0c0" stroke-width="0.6"/>
<path d="M174.8 406.0 V412.0 M172.0 408.0 H177.6 M172.8 410.2 H176.8" stroke="#c8c8c8" stroke-width="0.9"/>
<path d="M183.2 407.2 L185.0 409.0 L183.2 410.8 L181.4 409.0 Z" fill="none" stroke="#999" stroke-width="0.7"/>
<path d="M188.0 411.8 L193.2 406.2" stroke="#c8c8c8" stroke-width="0.9"/>
<rect x="213.0" y="405.6" width="7" height="6.8" fill="#444"/>
<rect x="221.0" y="405.6" width="7" height="6.8" fill="#444"/>
<rect x="229.0" y="405.6" width="7" height="6.8" fill="#444"/>
<circle cx="235.6" cy="417.8" r="2.8" fill="#e4e4e4"/><path d="M234.7 416.4 L237 417.8 L234.7 419.2 Z" fill="#222"/>
<circle cx="353.6" cy="382.4" r="1.4" fill="none" stroke="#c0c0c0" stroke-width="0.8"/><path d="M355 383.2 L357.6 382.4 L359.6 383.8 L359.6 386.6 L357.2 387.8 L355 386.4 Z" fill="none" stroke="#c0c0c0" stroke-width="0.8"/>
<path d="M370.4 387 V384.4 L374 382 L377.6 384.4 V387 Z" fill="#c0c0c0"/><rect x="372.4" y="384.6" width="3.2" height="1.2" fill="#2a2a2a"/>
<rect x="383.4" y="383.4" width="4.4" height="4.6" fill="#c0c0c0"/><rect x="385.4" y="381.6" width="4.4" height="4.6" fill="#c0c0c0" stroke="#232323" stroke-width="0.5"/>
<ellipse cx="400.8" cy="384.6" rx="3.6" ry="2" fill="none" stroke="#c0c0c0" stroke-width="1" transform="rotate(-40 400.8 384.6)"/>
<rect x="415.8" y="381.6" width="6.4" height="6.2" fill="none" stroke="#c0c0c0" stroke-width="0.8"/><path d="M417.2 383 L420.8 386.4" stroke="#c0c0c0" stroke-width="0.7"/>
<path d="M336 381 V388" stroke="#444" stroke-width="0.6"/>
<circle cx="367.6" cy="409" r="2" fill="none" stroke="#777" stroke-width="0.8"/><circle cx="367.6" cy="409" r="0.6" fill="#777"/>
<path d="M414.8 408.2 L416.6 410 L418.4 408.2" stroke="#8a8a8a" stroke-width="0.8" fill="none"/>
<path d="M995.6 396 H1000 V401.6 H997 L995.6 400.2 Z" fill="#d8d8d8"/>
<path d="M994.6 411 L998.6 407.4 L1000 409 L996.4 412.4 Z" fill="#c8c8c8"/>
<path d="M3.6 535 H7.6 L9 536.4 V539 H3.6 Z" fill="#2d6fc0"/><circle cx="16" cy="537.4" r="2.6" fill="#2d6fc0"/><path d="M24.6 535.2 H27.4 V539 H24.6 Z M23.6 536.4 H28.4 V537.6 H23.6 Z" fill="#c8c8c8"/>
<path d="M435 538 L437 536 L439 538 Z" fill="#c0c0c0"/><circle cx="447.8" cy="537.6" r="1.8" fill="none" stroke="#d0d0d0" stroke-width="0.9"/><path d="M450.6 537.4 H470" stroke="#555" stroke-width="0.8"/><path d="M476.6 539 L480.6 534.6 L484.6 539 Z" fill="#c0c0c0"/>
</svg>
<div class="t" style="left:25.8px;top:363.6px;font-size:6.4px;color:#a8a8a8;transform-origin:0 50%;transform:scaleX(0.8798)">Comp 1</div>
<div class="t" style="left:8.2px;top:376.4px;font-size:9.8px;line-height:12px;height:12px;color:#2d8ceb;transform-origin:0 50%;transform:scaleX(0.9155)">0:00:01:07</div>
<div class="t" style="left:8.4px;top:385px;font-size:4.9px;color:#1f5da8;transform-origin:0 50%;transform:scaleX(1.0693)">00032 (25.00 fps)</div>
<div class="t" style="left:56.6px;top:394.6px;font-size:5.8px;color:#7c7c7c">#</div>
<div class="t" style="left:72.6px;top:394.6px;font-size:5.6px;color:#7c7c7c;transform-origin:0 50%;transform:scaleX(0.8420)">Source Name</div>
<div class="t" style="left:57.4px;top:404.4px;font-size:7.4px;color:#d0d0d0;font-weight:bold">1</div>
<div class="t" style="left:82.6px;top:405px;font-size:7.4px;color:#e0e0e0;font-weight:bold;text-decoration:underline;height:7.6px;overflow:hidden;transform-origin:0 50%;transform:scaleX(0.9177)">Shape Layer 1</div>
<div class="t" style="left:57px;top:414px;font-size:6.8px;color:#a0a0a0;transform-origin:0 50%;transform:scaleX(0.9442)">Contents</div>
<div class="t" style="left:66px;top:422.8px;font-size:6.8px;color:#a8a8a8;transform-origin:0 50%;transform:scaleX(0.9476)">Shape 1</div>
<div class="t" style="left:57px;top:432px;font-size:6.8px;color:#a0a0a0;transform-origin:0 50%;transform:scaleX(0.9375)">Transform</div>
<div class="t" style="left:217.6px;top:413.4px;font-size:6.6px;color:#b0b0b0;transform-origin:0 50%;transform:scaleX(0.7807)">Add:</div>
<div class="t" style="left:176.4px;top:422.2px;font-size:6.2px;color:#b8b8b8;transform-origin:0 50%;transform:scaleX(0.9623)">Normal</div>
<div class="t" style="left:172.4px;top:432px;font-size:6.6px;color:#2d6fc8;transform-origin:0 50%;transform:scaleX(0.9980)">Reset</div>
<div class="t" style="left:364.6px;top:395.2px;font-size:5.4px;color:#7c7c7c;transform-origin:0 50%;transform:scaleX(0.8649)">Parent &amp; Link</div>
<div class="t" style="left:378px;top:404.4px;font-size:6px;color:#b0b0b0;transform-origin:0 50%;transform:scaleX(0.8924)">None</div>
<div class="t" style="left:197.6px;top:394.4px;font-size:6.4px;font-style:italic;font-family:'Liberation Serif',serif;color:#c0c0c0;transform:translateX(-50%)">fx</div>


<!-- context menu -->
<div class="a" style="left:238.7px;top:181px;width:102px;height:232.8px;background:#f2f2f2;box-shadow:0 0 2.5px 0.6px rgba(0,0,0,0.55)"></div>
<div class="t mi" style="left:257px;top:183.8px;transform-origin:0 50%;transform:scaleX(1.0039)">Group (empty)</div>
<div class="t mi" style="left:257px;top:198.8px;transform-origin:0 50%;transform:scaleX(0.9801)">Rectangle</div>
<div class="t mi" style="left:257px;top:210.3px;transform-origin:0 50%;transform:scaleX(0.9635)">Ellipse</div>
<div class="t mi" style="left:257px;top:221.8px;transform-origin:0 50%;transform:scaleX(0.9690)">Polystar</div>
<div class="t mi" style="left:257px;top:233.3px;transform-origin:0 50%;transform:scaleX(0.9296)">Path</div>
<div class="t mi" style="left:257px;top:248.3px;transform-origin:0 50%;transform:scaleX(0.8633)">Fill</div>
<div class="t mi" style="left:257px;top:259.8px;transform-origin:0 50%;transform:scaleX(1.0073)">Stroke</div>
<div class="t mi" style="left:257px;top:271.3px;transform-origin:0 50%;transform:scaleX(0.9716)">Gradient Fill</div>
<div class="t mi" style="left:257px;top:282.8px;transform-origin:0 50%;transform:scaleX(1.0103)">Gradient Stroke</div>
<div class="t mi" style="left:257px;top:298.0px;transform-origin:0 50%;transform:scaleX(1.0014)">Merge Paths</div>
<div class="t mi" style="left:257px;top:309.5px;transform-origin:0 50%;transform:scaleX(0.9817)">Offset Paths</div>
<div class="t mi" style="left:257px;top:321.0px;transform-origin:0 50%;transform:scaleX(1.0140)">Pucker &amp; Bloat</div>
<div class="t mi" style="left:257px;top:332.5px;transform-origin:0 50%;transform:scaleX(0.9868)">Repeater</div>
<div class="t mi" style="left:257px;top:344.0px;transform-origin:0 50%;transform:scaleX(1.0001)">Round Corners</div>
<div class="t mi" style="left:257px;top:355.5px;transform-origin:0 50%;transform:scaleX(0.9752)">Trim Paths</div>
<div class="t mi" style="left:257px;top:367.0px;transform-origin:0 50%;transform:scaleX(0.9687)">Twist</div>
<div class="t mi" style="left:257px;top:378.5px;transform-origin:0 50%;transform:scaleX(0.9888)">Wiggle Paths</div>
<div class="t mi" style="left:257px;top:390.0px;transform-origin:0 50%;transform:scaleX(1.0344)">Wiggle Transform</div>
<div class="t mi" style="left:257px;top:401.5px;transform-origin:0 50%;transform:scaleX(0.9980)">Zig Zag</div>
<div class="a" style="left:257px;top:195.8px;width:81px;height:0.8px;background:#e0e0e0"></div>
<div class="a" style="left:257px;top:245.2px;width:81px;height:0.8px;background:#e0e0e0"></div>
<div class="a" style="left:257px;top:294.8px;width:81px;height:0.8px;background:#e0e0e0"></div>


<!-- red arrow -->
<svg style="left:225px;top:415px" width="30" height="52" viewBox="225 415 30 52">
 <path d="M232.5 419.6 L237.7 425.8 L236.7 426.8 L246.6 462.6 L231.4 428.6 L230.1 428.8 Z" fill="#e8212b"/>
</svg>
<!-- cloud upload widget -->
<div class="a" style="left:893.4px;top:13.4px;width:54.4px;height:12.6px;background:#d2eafc;border-radius:1.6px;box-shadow:0 0 1.5px rgba(0,60,140,0.35)"></div>
<div class="a" style="left:893.4px;top:13.4px;width:15.4px;height:12.6px;background:#2493f0;border-radius:1.6px 0 0 1.6px"></div>
<svg style="left:893.4px;top:13.4px" width="16" height="13" viewBox="0 0 16 13">
 <g fill="none" stroke="#fff" stroke-width="1.3"><circle cx="7.7" cy="4.6" r="1.9"/><circle cx="4.9" cy="8" r="1.9"/><circle cx="10.5" cy="8" r="1.9"/></g>
</svg>
<div class="t" style="left:916px;top:14.6px;font-size:6.3px;color:#78bdf5;font-family:'Liberation Sans','Noto Sans CJK SC',sans-serif">拖拽上传</div>
<!-- IME bar -->
<div class="a" style="left:908px;top:525px;width:92px;height:12.2px;background:#fdfdfd"></div>
<svg style="left:890px;top:520px" width="110" height="19" viewBox="890 520 110 19">
 <path d="M896.6 524.4 L909.4 523 L910.2 536.4 L897.4 537.8 Z" fill="#e8501e"/>
 <path d="M906.6 527.2 Q900.4 525.4 899.8 528.6 Q899.6 530.6 903.2 530.8 Q906.6 531.2 906.4 533 Q905.8 535.6 899.6 533.8" fill="none" stroke="#fff" stroke-width="1.7" stroke-linecap="round"/>
 <g fill="#2a72c8">
  <circle cx="927.4" cy="529.4" r="0.9"/><path d="M929.8 531 L931.4 532.8 L929.8 534.2 Z"/>
  <rect x="950.2" y="526.4" width="3" height="5.6" rx="1.5"/><path d="M948.6 530.6 Q951.7 535.4 954.8 530.6" fill="none" stroke="#2a72c8" stroke-width="0.8"/><rect x="951.3" y="533.4" width="0.9" height="2.4"/>
  <rect x="959.2" y="527.6" width="8.8" height="6.4" rx="0.8"/>
  <path d="M981.6 527.2 L984.2 526.4 L986 527.4 L987.8 526.4 L990.4 527.2 L991.4 529.8 L989.6 530.4 L989.2 535.4 L982.8 535.4 L982.4 530.4 L980.6 529.8 Z"/>
  <rect x="994" y="527" width="2.6" height="3.2"/><rect x="997.4" y="527" width="2.6" height="3.2"/><rect x="994" y="531.2" width="2.6" height="3.2"/><rect x="997.4" y="531.2" width="2.6" height="3.2"/>
 </g>
 <path d="M960.6 529.6 H966.6 M960.6 531.6 H966.6" stroke="#fff" stroke-width="0.7" stroke-dasharray="1 0.6"/>
 <circle cx="940.6" cy="531" r="3.6" fill="none" stroke="#2a72c8" stroke-width="0.9"/>
 <circle cx="939.4" cy="530" r="0.5" fill="#2a72c8"/><circle cx="941.8" cy="530" r="0.5" fill="#2a72c8"/><path d="M938.8 532 Q940.6 533.8 942.4 532" fill="none" stroke="#2a72c8" stroke-width="0.6"/>
 <g fill="#c4c8d0"><circle cx="974.4" cy="527.6" r="1.3"/><path d="M972.4 529.6 H976.4 V533 H978.2 V536 H972.4 Z"/></g>
</svg>
<div class="t" style="left:913.4px;top:526.4px;font-size:8px;color:#2a72c8;font-weight:bold;font-family:'Liberation Sans','Noto Sans CJK SC',sans-serif">中</div>


</body></html>
